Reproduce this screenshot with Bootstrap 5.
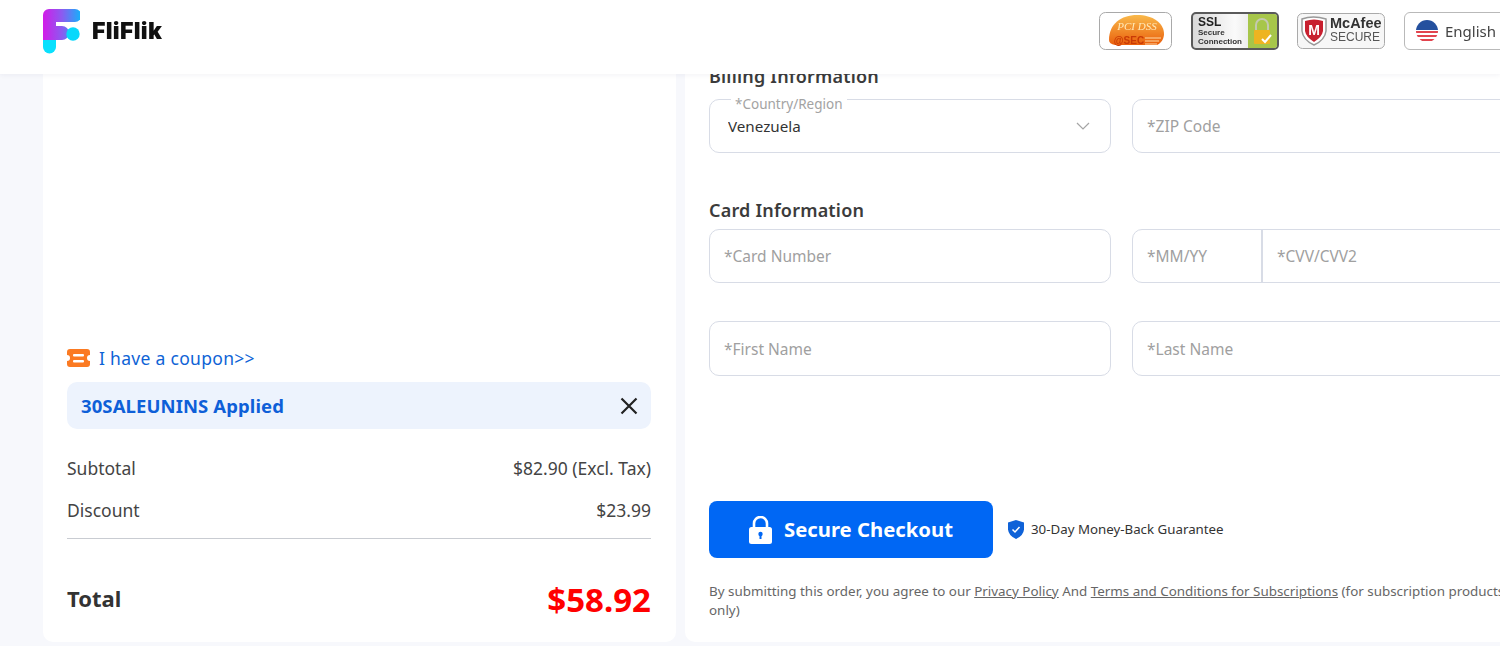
<!DOCTYPE html>
<html lang="en">
<head>
<meta charset="utf-8">
<title>FliFlik Checkout</title>
<link rel="stylesheet" href="https://cdn.jsdelivr.net/npm/bootstrap@5.3.0/dist/css/bootstrap.min.css">
<style>
html,body{height:646px;overflow:hidden}
body{background:#f7f8fc;font-family:"Noto Sans","Open Sans",sans-serif;color:#333}
.top-head{position:fixed;top:0;left:0;width:1500px;height:74px;background:#fff;z-index:5;box-shadow:0 1px 5px rgba(30,40,80,.06);padding:0 0 12px 43px}
.brand-name{font-family:"Inter","Liberation Sans",sans-serif;font-weight:900;font-size:23px;color:#111;margin-left:12px;letter-spacing:.3px}
.seal-row{margin-left:auto;width:401px;flex:none}
.seal{display:block;flex:none}
.lang-btn{width:130px;height:38px;flex:none;border:1px solid #b9b9b9;border-radius:6px;font-size:15px;color:#444;padding-left:11px;margin-left:19px;background:#fff;gap:7px}
.page-wrap{width:1600px;padding-left:43px;gap:9px}
.left-pane,.right-pane{height:642px;background:#fff;border-radius:0 0 10px 10px;flex:none}
.left-pane{width:633px;padding:0 25px 22px 24px}
.right-pane{width:900px;padding:64px 0 0 24px}
.coupon-link{color:#0e63d6;font-size:17.500px;line-height:24px;gap:9px;margin-bottom:12px;letter-spacing:.3px}
.applied{height:47px;background:#edf3fd;border-radius:10px;padding:0 13px 0 14px;margin-bottom:26px}
.applied-code{color:#0e5fd8;font-weight:700;font-size:18.500px;letter-spacing:.1px}
.sum-row{font-size:17.500px;color:#444;line-height:26px;margin-bottom:16px}
.sum-last{margin-bottom:13px}
.sum-line{border-top:1px solid #c9ccd2;margin:2px 0 41px}
.total-row{align-items:flex-start}
.total-label{font-size:22px;font-weight:700;color:#333;line-height:36px}
.total-price{font-size:33px;font-weight:700;color:#f00;line-height:40px}
.sec-title{font-size:18px;font-weight:600;color:#3b3b3b;line-height:24px;letter-spacing:.2px;margin:0}
.form-cols{display:grid;grid-template-columns:402px 402px;column-gap:21px}
.right-pane .form-control,.right-pane .form-select{height:54px;border:1px solid #d8dce6;border-radius:10px;font-size:15.500px;box-shadow:none;color:#333}
.right-pane .form-control{padding-left:14px}
.right-pane .form-control::placeholder{color:#a0a0a0;opacity:1}
.right-pane .form-select{font-size:15.200px;padding:0 14px 0 18px;--bs-form-select-bg-img:url("data:image/svg+xml,%3csvg xmlns='http://www.w3.org/2000/svg' viewBox='0 0 14 8'%3e%3cpath fill='none' stroke='%23a5a5a5' stroke-width='1.200' d='M1 1l6 6 6-6'/%3e%3c/svg%3e");background-position:right 20px center;background-size:14px 8px}
.right-pane .name-row .form-control{height:55px}
.float-wrap{position:relative}
.float-label{position:absolute;left:22px;top:-4px;background:#fff;padding:0 4px;font-size:13.500px;line-height:18px;color:#a3a3a3;z-index:1}
.date-input{flex:0 0 130px!important;width:130px!important}
.right-pane .input-group .cvv-input{border-left:2px solid #d8dce6}
.buy-btn{width:284px;height:57px;background:#0067f4;border:0;border-radius:8px;color:#fff;font-size:20.300px;font-weight:700;gap:12px;--bs-btn-hover-bg:#0067f4}
.pledge{font-size:13.300px;color:#333;gap:6px;margin-left:14px}
.legal{font-size:13.400px;line-height:19px;color:#666;width:812px;margin:24px 0 0}
.legal a{color:#666}
</style>
</head>
<body>
<header class="top-head d-flex align-items-center">
  <svg width="37" height="45" viewBox="0 0 37 45" class="flex-none">
    <defs>
      <linearGradient id="fg" x1="0" y1="0" x2="1" y2="0"><stop offset="0" stop-color="#d31be8"/><stop offset=".5" stop-color="#8a5cf0"/><stop offset="1" stop-color="#0fb5fb"/></linearGradient>
    </defs>
    <path d="M6 0H32A5 5 0 0 1 32 13H13V17H19A7 7 0 0 1 19 31H13V38H0V6A6 6 0 0 1 6 0Z" fill="url(#fg)"/>
    <circle cx="30" cy="25" r="6.700" fill="#08d8fb"/>
    <path d="M0 31H13V38A6.500 6.500 0 0 1 0 38Z" fill="#0ae0fd"/>
  </svg>
  <span class="brand-name">FliFlik</span>
  <div class="seal-row d-flex align-items-center">
    <svg class="seal" width="73" height="38" viewBox="0 0 73 38" style="margin-right:19px">
      <defs><linearGradient id="og" x1="0" y1="0" x2="0" y2="1"><stop offset="0" stop-color="#f9b94a"/><stop offset="1" stop-color="#ea5f0c"/></linearGradient></defs>
      <rect x=".5" y=".5" width="72" height="37" rx="6" fill="#fff" stroke="#a9a9a9"/>
      <path d="M10 28C10 12 22 3 38 3C54 3 65 11 65 22C65 27 62 31 58 33H16Q10 32 10 28Z" fill="url(#og)"/>
      <text x="38" y="18" font-size="11" font-style="italic" fill="#ffe9b8" text-anchor="middle" font-family="Liberation Serif,serif">PCI DSS</text>
      <path d="M46 26H62M46 29H60M46 32H58" stroke="#ffd9a6" stroke-width="1"/>
      <text x="30" y="32" font-size="10" font-weight="700" fill="#c93a06" text-anchor="middle" font-family="Liberation Sans,sans-serif">@SEC</text>
    </svg>
    <svg class="seal" width="88" height="38" viewBox="0 0 88 38" style="margin-right:18px">
      <defs><linearGradient id="sg" x1="0" y1="0" x2="1" y2="0"><stop offset="0" stop-color="#d9d9d9"/><stop offset=".5" stop-color="#fafafa"/><stop offset="1" stop-color="#cfcfcf"/></linearGradient></defs>
      <rect x="1" y="1" width="86" height="36" rx="4" fill="url(#sg)" stroke="#5a5a5a" stroke-width="2"/>
      <path d="M57 2H83A3 3 0 0 1 86 5V33A3 3 0 0 1 83 36H57Z" fill="#a7c64a"/>
      <path d="M65 19V13A6 6 0 0 1 77 13V19" fill="none" stroke="#c4c9b0" stroke-width="2"/>
      <rect x="63" y="18" width="16" height="14" rx="1" fill="#eeb421"/>
      <path d="M71 27L74 30L80 23" fill="none" stroke="#fff" stroke-width="2"/>
      <text x="7" y="14" font-size="12" font-weight="700" fill="#222" font-family="Liberation Sans,sans-serif">SSL</text>
      <text x="7" y="23" font-size="8" font-weight="700" fill="#333" font-family="Liberation Sans,sans-serif">Secure</text>
      <text x="7" y="32" font-size="8" font-weight="700" fill="#333" font-family="Liberation Sans,sans-serif">Connection</text>
    </svg>
    <svg class="seal" width="88" height="36" viewBox="0 0 88 36">
      <rect x=".5" y=".5" width="87" height="35" rx="5" fill="#f7f7f7" stroke="#aaa"/>
      <path d="M5 6Q16 2 29 6V18Q28 27 17 32Q6 27 5 18Z" fill="#fff" stroke="#999" stroke-width="1.500"/>
      <path d="M8 8Q17 5 26 8V18Q25 24 17 29Q9 24 8 18Z" fill="#c8202f"/>
      <text x="17" y="22" font-size="14" font-weight="700" fill="#fff" text-anchor="middle" font-family="Liberation Sans,sans-serif">M</text>
      <text x="33" y="15" font-size="14.500" font-weight="700" fill="#333" font-family="Liberation Sans,sans-serif">McAfee</text>
      <text x="33" y="28" font-size="12" fill="#555" font-family="Liberation Sans,sans-serif">SECURE</text>
    </svg>
    <div class="lang-btn d-flex align-items-center">
      <svg width="22" height="22" viewBox="0 0 22 22">
        <defs><clipPath id="fc"><circle cx="11" cy="11" r="11"/></clipPath></defs>
        <g clip-path="url(#fc)">
          <rect width="22" height="22" fill="#fff"/>
          <rect y="11" width="22" height="2" fill="#e2444e"/><rect y="15" width="22" height="2" fill="#e2444e"/><rect y="19" width="22" height="2" fill="#e2444e"/>
          <rect width="22" height="10" fill="#24509e"/>
        </g>
      </svg>
      <span>English</span>
    </div>
  </div>
</header>

<main class="page-wrap d-flex">
  <section class="left-pane d-flex flex-column justify-content-end">
    <div class="coupon-link d-flex align-items-center">
      <svg width="23" height="18" viewBox="0 0 23 18"><path d="M3 0H20A3 3 0 0 1 23 3V6A3 3 0 0 0 23 12V15A3 3 0 0 1 20 18H3A3 3 0 0 1 0 15V12A3 3 0 0 0 0 6V3A3 3 0 0 1 3 0Z" fill="#fb7a22"/><rect x="6" y="5" width="11" height="2.500" rx="1" fill="#fff"/><rect x="6" y="11" width="11" height="2.500" rx="1" fill="#fff"/></svg>
      <span>I have a coupon&gt;&gt;</span>
    </div>
    <div class="applied d-flex align-items-center justify-content-between">
      <span class="applied-code">30SALEUNINS Applied</span>
      <svg width="18" height="18" viewBox="0 0 18 18"><path d="M1.500 1.500L16.500 16.500M16.500 1.500L1.500 16.500" stroke="#222" stroke-width="2.200"/></svg>
    </div>
    <div class="sum-row d-flex justify-content-between"><span>Subtotal</span><span>$82.90 (Excl. Tax)</span></div>
    <div class="sum-row sum-last d-flex justify-content-between"><span>Discount</span><span>$23.99</span></div>
    <div class="sum-line"></div>
    <div class="total-row d-flex justify-content-between">
      <span class="total-label">Total</span>
      <span class="total-price">$58.92</span>
    </div>
  </section>

  <section class="right-pane">
    <h2 class="sec-title" style="margin-bottom:11px">Billing Information</h2>
    <div class="form-cols">
      <div class="float-wrap">
        <span class="float-label">*Country/Region</span>
        <select class="form-select"><option>Venezuela</option></select>
      </div>
      <input class="form-control" placeholder="*ZIP Code">
    </div>
    <h2 class="sec-title" style="margin:45px 0 7px">Card Information</h2>
    <div class="form-cols">
      <input class="form-control" placeholder="*Card Number">
      <div class="input-group">
        <input class="form-control date-input" placeholder="*MM/YY">
        <input class="form-control cvv-input" placeholder="*CVV/CVV2">
      </div>
    </div>
    <div class="form-cols name-row" style="margin-top:38px">
      <input class="form-control" placeholder="*First Name">
      <input class="form-control" placeholder="*Last Name">
    </div>
    <div class="d-flex align-items-center" style="margin-top:125px">
      <button class="btn buy-btn d-flex align-items-center justify-content-center" type="button">
        <svg width="23" height="28" viewBox="0 0 23 28"><path d="M5 12V7.500A6.500 6.500 0 0 1 18 7.500V12" fill="none" stroke="#fff" stroke-width="2.600"/><rect y="11" width="23" height="17" rx="2.500" fill="#fff"/><circle cx="11.500" cy="18" r="2.200" fill="#0067f4"/><rect x="10.500" y="18" width="2" height="5" fill="#0067f4"/></svg>
        <span>Secure Checkout</span>
      </button>
      <div class="pledge d-flex align-items-center">
        <svg width="18" height="19" viewBox="0 0 18 19"><path d="M9 0L17 2.500V9.500Q16.500 15.500 9 19Q1.500 15.500 1 9.500V2.500Z" fill="#0f62d8"/><path d="M5.500 9.500L8 12L12.500 7" fill="none" stroke="#fff" stroke-width="1.500"/></svg>
        <span>30-Day Money-Back Guarantee</span>
      </div>
    </div>
    <p class="legal">By submitting this order, you agree to our <a href="#">Privacy Policy</a> And <a href="#">Terms and Conditions for Subscriptions</a> (for subscription products only)</p>
  </section>
</main>
</body>
</html>
